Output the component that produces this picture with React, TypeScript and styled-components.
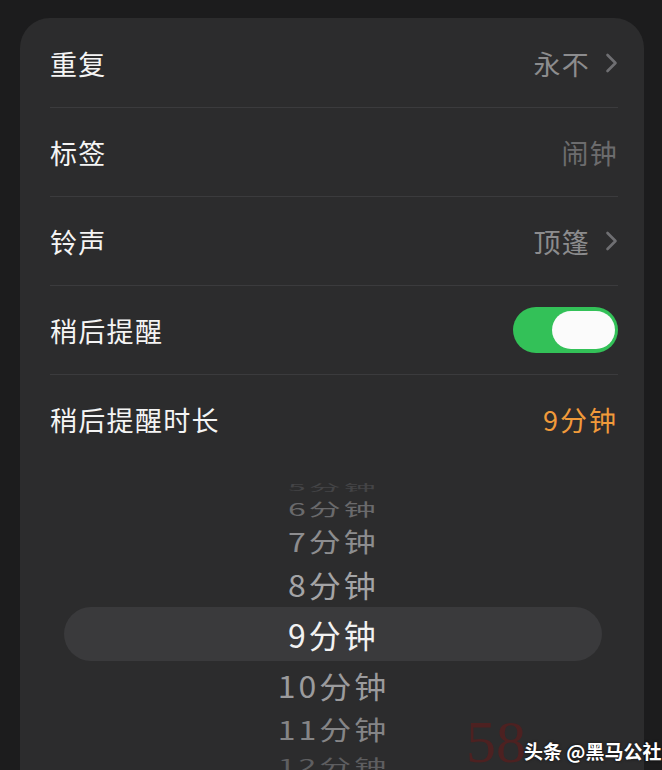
import React from "react";
import styled, { createGlobalStyle } from "styled-components";

const Global = createGlobalStyle`
  html, body { margin: 0; padding: 0; background: #1c1c1d; overflow: hidden; }
  body { font-family: "Noto Sans CJK SC", "Noto Sans", sans-serif; }
  #root { width: 662px; height: 770px; }
`;

const Page = styled.div`
  position: relative;
  width: 662px;
  height: 770px;
  overflow: hidden;
  padding: 18px 18px 0 20px;
  box-sizing: border-box;
`;

const Card = styled.div`
  background: #2c2c2d;
  border-radius: 30px;
  height: 790px;
  padding-top: 1px;
  box-sizing: border-box;
`;

const Row = styled.div<{ $last?: boolean }>`
  height: 88px;
  margin: 0 26px 0 30px;
  display: flex;
  align-items: center;
  justify-content: space-between;
  border-bottom: ${(p) => (p.$last ? "none" : "1px solid #3b3b3d")};
`;

const Label = styled.span`
  color: #f4f4f4;
  font-size: 27px;
  letter-spacing: 1.3px;
`;

const Value = styled.span<{ $accent?: boolean; $dim?: boolean }>`
  display: flex;
  align-items: center;
  gap: 15px;
  color: ${(p) => (p.$accent ? "#f19a3a" : p.$dim ? "#6c6c6e" : "#8c8c8e")};
  font-size: 27px;
  letter-spacing: ${(p) => (p.$accent ? "2px" : "1.3px")};
`;

const Chevron = () => (
  <svg width="13" height="20" viewBox="0 0 13 20" fill="none">
    <path d="M2.5 2 L10.5 10 L2.5 18" stroke="#6f6f72" strokeWidth="2.6" strokeLinecap="round" strokeLinejoin="round" />
  </svg>
);

const Toggle = styled.div`
  width: 105px;
  height: 46px;
  border-radius: 23px;
  background: #33c158;
  display: flex;
  align-items: center;
  justify-content: flex-end;
  padding: 0 3px;
  box-sizing: border-box;
`;

const Knob = styled.div`
  width: 63px;
  height: 38px;
  border-radius: 19px;
  background: #fbfbfb;
`;

const Picker = styled.div`
  margin-top: 16px;
  position: relative;
  display: flex;
  flex-direction: column;
  align-items: center;
`;

const Pill = styled.div`
  position: absolute;
  left: 44px;
  right: 42px;
  top: 128px;
  height: 54px;
  border-radius: 27px;
  background: #3a3a3c;
`;

const Item = styled.div<{ $h: number; $color: string; $sy: number }>`
  position: relative;
  height: ${(p) => p.$h}px;
  width: 100%;
  display: flex;
  align-items: center;
  justify-content: center;
  color: ${(p) => p.$color};
  font-size: 32px;
  font-family: "Noto Sans CJK SC", "Noto Sans", sans-serif;
  letter-spacing: 3px;
  text-indent: 3px;
  line-height: 1;
  white-space: nowrap;
  transform: scaleY(${(p) => p.$sy});
`;

const Watermark = styled.div`
  position: absolute;
  left: 466px;
  top: 712px;
  display: flex;
  align-items: flex-end;
`;

const RedMark = styled.span`
  font-family: "Liberation Serif", serif;
  font-size: 60px;
  color: rgba(110, 22, 22, 0.5);
  line-height: 1;
`;

const Credit = styled.span`
  font-family: "Noto Sans CJK SC", sans-serif;
  font-size: 19px;
  font-weight: 700;
  color: #ffffff;
  text-shadow: 0 0 3px rgba(0, 0, 0, 0.8);
  margin-bottom: 8px;
  margin-left: -2px;
  white-space: nowrap;
`;

const items = [
  { t: "5分钟", h: 16, c: "#444446", sy: 0.3 },
  { t: "6分钟", h: 26, c: "#6a6a6c", sy: 0.55 },
  { t: "7分钟", h: 40, c: "#8d8d8f", sy: 0.8 },
  { t: "8分钟", h: 46, c: "#a4a4a6", sy: 0.92 },
  { t: "9分钟", h: 54, c: "#f2f2f2", sy: 1 },
  { t: "10分钟", h: 48, c: "#9b9b9d", sy: 0.92 },
  { t: "11分钟", h: 40, c: "#858587", sy: 0.8 },
  { t: "12分钟", h: 30, c: "#5e5e60", sy: 0.55 },
];

export default function App() {
  return (
    <>
      <Global />
      <Page>
        <Card>
          <Row>
            <Label>重复</Label>
            <Value>
              永不
              <Chevron />
            </Value>
          </Row>
          <Row>
            <Label>标签</Label>
            <Value $dim>闹钟</Value>
          </Row>
          <Row>
            <Label>铃声</Label>
            <Value>
              顶篷
              <Chevron />
            </Value>
          </Row>
          <Row>
            <Label>稍后提醒</Label>
            <Toggle>
              <Knob />
            </Toggle>
          </Row>
          <Row $last>
            <Label>稍后提醒时长</Label>
            <Value $accent>9分钟</Value>
          </Row>
          <Picker>
            <Pill />
            {items.map((it) => (
              <Item key={it.t} $h={it.h} $color={it.c} $sy={it.sy}>
                {it.t}
              </Item>
            ))}
          </Picker>
        </Card>
        <Watermark>
          <RedMark>58</RedMark>
          <Credit>头条 @黑马公社</Credit>
        </Watermark>
      </Page>
    </>
  );
}
